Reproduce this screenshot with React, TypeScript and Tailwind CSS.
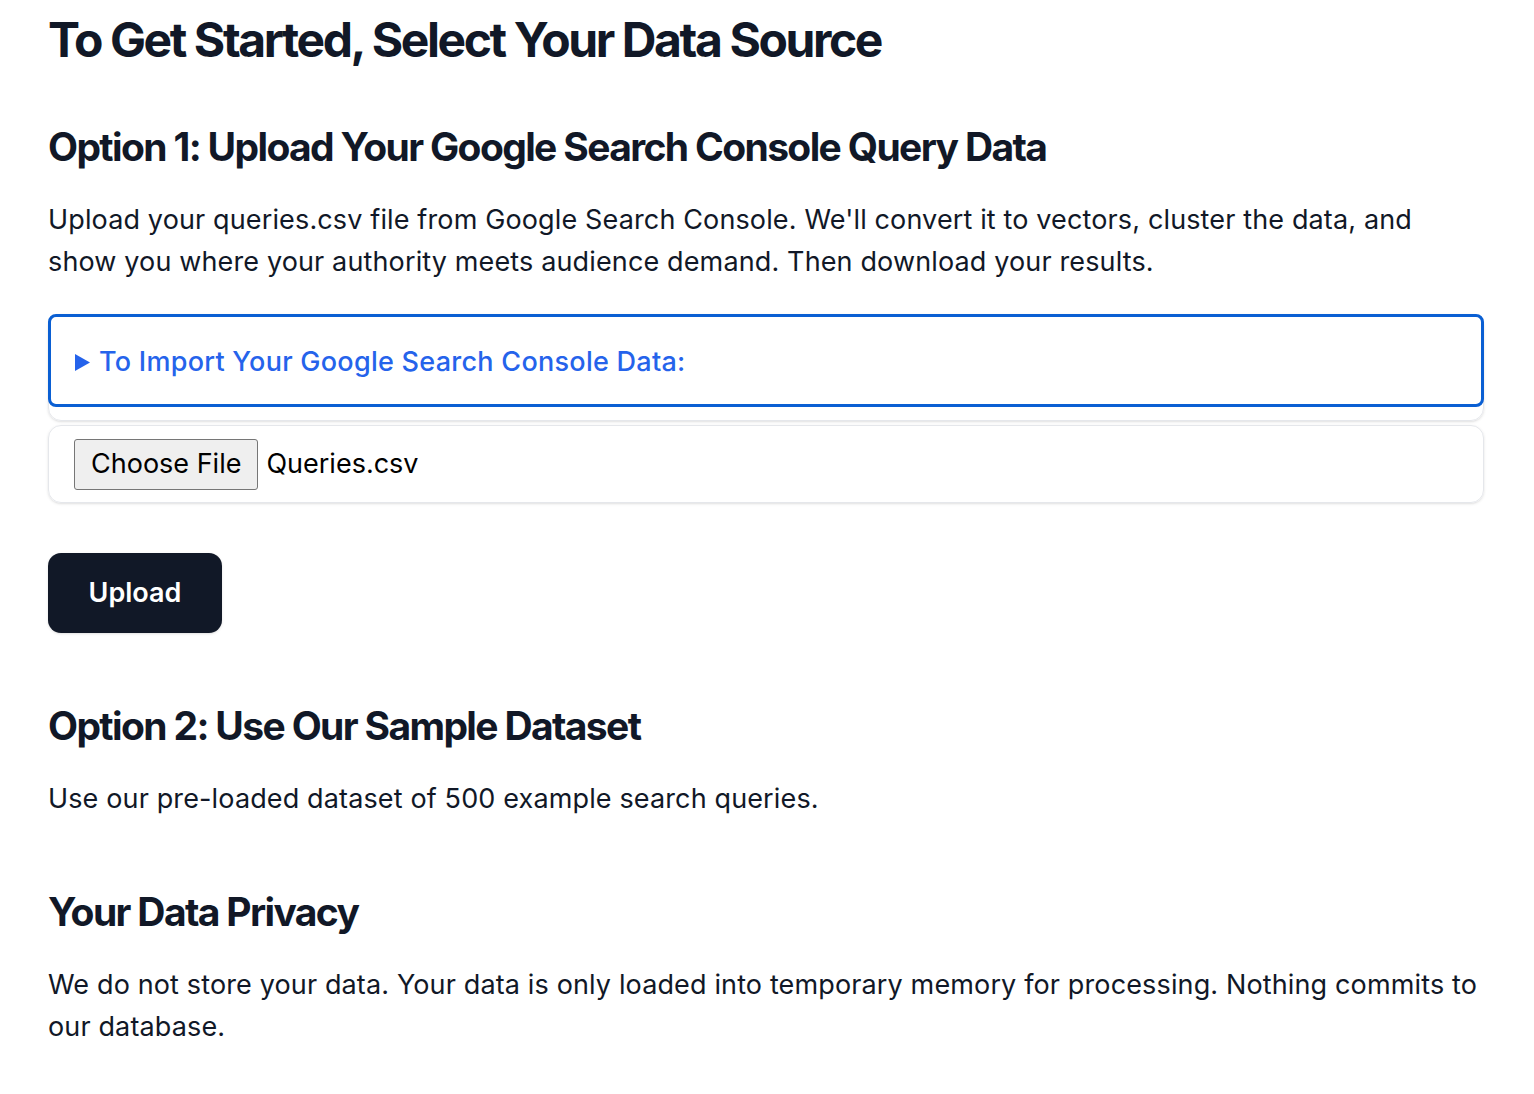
import React from "react";

const font = { fontFamily: "Inter, 'Noto Sans', sans-serif" };

export default function App() {
  return (
    <div className="min-h-screen bg-white text-[#111827] px-[48px] pr-[50px]" style={font}>
      <h1 className="pt-[11px] text-[48px] leading-[58px] font-bold tracking-[-0.05em]">
        To Get Started, Select Your Data Source
      </h1>

      <h2 className="mt-[54px] text-[39px] leading-[47px] font-bold tracking-[-0.042em]">
        Option 1: Upload Your Google Search Console Query Data
      </h2>
      <p className="mt-[29px] text-[27px] leading-[42px] tracking-[0.005em]">
        Upload your queries.csv file from Google Search Console. We'll convert it to vectors, cluster the data, and
        show you where your authority meets audience demand. Then download your results.
      </p>

      <div className="mt-[31px] rounded-[13px] border border-[#e5e7eb] shadow-sm pb-[14px]">
        <div className="-m-px flex items-center h-[93px] rounded-[8px] border-[3px] border-[#0a5fd3] pl-[24px] pt-[3px]">
          <svg width="15" height="17" viewBox="0 0 15 17" className="shrink-0">
            <path d="M0 0 L15 8.5 L0 17 Z" fill="#2563eb" />
          </svg>
          <span className="ml-[9px] text-[27px] font-medium tracking-[0.01em] text-[#2563eb]">
            To Import Your Google Search Console Data:
          </span>
        </div>
      </div>

      <div className="mt-[4px] flex items-center h-[78px] rounded-[13px] border border-[#e5e7eb] shadow-sm pl-[25px]">
        <button className="h-[51px] px-[16px] bg-[#efefef] border border-[#767676] rounded-[3px] text-[27px] text-black">
          Choose File
        </button>
        <span className="ml-[8px] text-[27px] text-black">Queries.csv</span>
      </div>

      <button className="mt-[50px] h-[80px] w-[174px] rounded-[13px] bg-[#111827] text-white text-[27px] font-semibold shadow-sm">
        Upload
      </button>

      <h2 className="mt-[69px] text-[39px] leading-[47px] font-bold tracking-[-0.042em]">
        Option 2: Use Our Sample Dataset
      </h2>
      <p className="mt-[29px] text-[27px] leading-[42px] tracking-[0.005em]">
        Use our pre-loaded dataset of 500 example search queries.
      </p>

      <h2 className="mt-[68px] text-[39px] leading-[47px] font-bold tracking-[-0.042em]">
        Your Data Privacy
      </h2>
      <p className="mt-[29px] text-[27px] leading-[42px] tracking-[0.005em]">
        We do not store your data. Your data is only loaded into temporary memory for processing. Nothing commits to
        our database.
      </p>
    </div>
  );
}
